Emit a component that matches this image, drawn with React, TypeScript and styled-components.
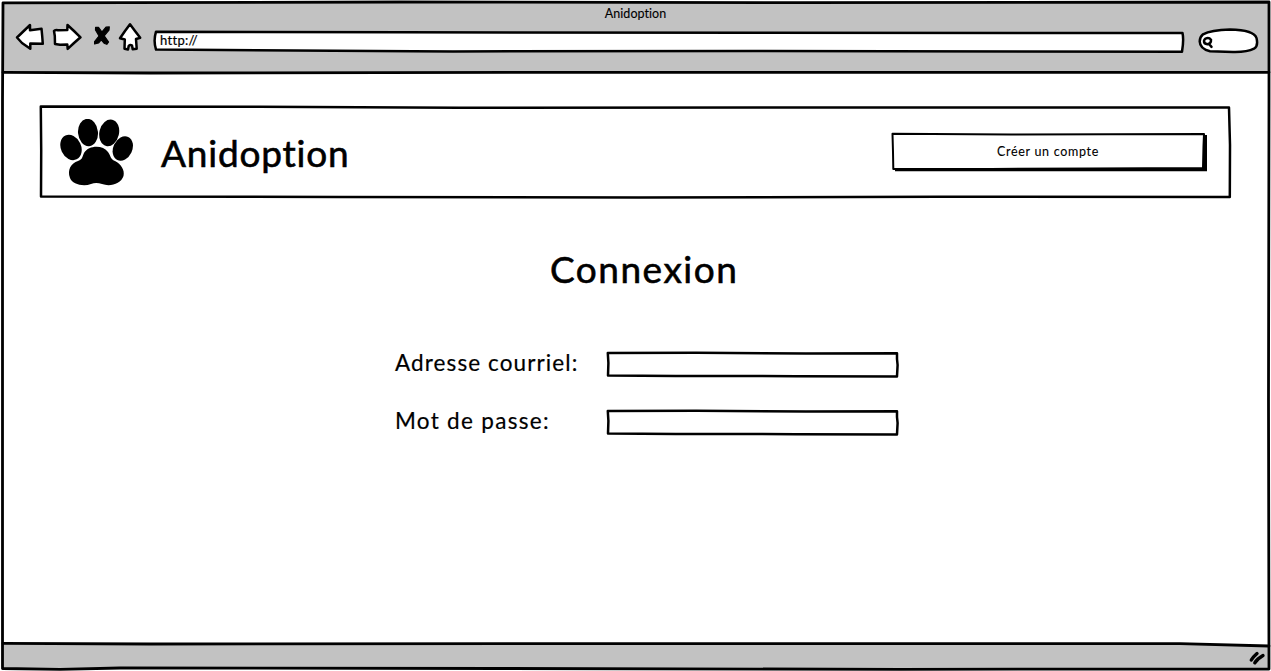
import React from "react";
import styled, { createGlobalStyle } from "styled-components";

const GlobalStyle = createGlobalStyle`
  * { box-sizing: border-box; }
  body { margin: 0; background: #fff; color: #000; font-family: Lato, "Open Sans", sans-serif; }
`;

const BrowserWindow = styled.div`
  position: relative;
  width: 1271px;
  height: 671px;
  padding: 2px;
  display: flex;
  flex-direction: column;
  overflow: hidden;
`;

const Chrome = styled.header`
  height: 71px;
  background: #c2c2c2;
  display: flex;
  flex-direction: column;
`;

const WindowTitle = styled.div`
  height: 20px;
  padding-top: 4px;
  text-align: center;
  font-size: 12.5px;
  line-height: 15px;
  letter-spacing: 0.05px;
  -webkit-text-stroke: 0.1px #000;
`;

const Toolbar = styled.div`
  display: flex;
  align-items: flex-start;
  padding-left: 12px;
`;

const NavIcon = styled.svg<{ $gap: number }>`
  display: block;
  flex: none;
  margin-right: ${(p) => p.$gap}px;
  stroke: #000;
  stroke-width: 2.5;
  stroke-linejoin: round;
  stroke-linecap: round;
  fill: #fff;
`;

const SolidIcon = styled(NavIcon)`
  fill: #000;
  stroke-width: 1.2;
`;

const AddressBar = styled.div`
  position: relative;
  width: 1031px;
  height: 23px;
  margin: 8px 14px 0 0;
  padding: 2px 0 0 7px;
  font-size: 13px;
  line-height: 17px;
  letter-spacing: 0.3px;
  -webkit-text-stroke: 0.2px #000;
`;

const Outline = styled.svg<{ $weight?: number; $fill?: string }>`
  position: absolute;
  inset: 0;
  width: 100%;
  height: 100%;
  overflow: visible;
  pointer-events: none;
  fill: ${(p) => p.$fill ?? "none"};
  stroke: #000;
  stroke-width: ${(p) => p.$weight ?? 2.5};
  stroke-linejoin: round;
  stroke-linecap: round;
`;

const ShadowShape = styled.path`
  fill: #000;
  stroke: none;
`;

const Label = styled.span`
  position: relative;
`;

const Page = styled.main`
  flex: 1;
  display: flex;
  flex-direction: column;
  padding: 32px 39px 0 37px;
`;

const Banner = styled.section`
  position: relative;
  height: 93px;
  width: 1193px;
  display: flex;
  align-items: center;
  padding: 2px 25px 0 20px;
`;

const Paw = styled.svg`
  display: block;
  flex: none;
  margin-right: 27px;
`;

const Heading = styled.h1<{ $spacing: number }>`
  margin: 0;
  font-size: 37px;
  line-height: 44px;
  font-weight: 400;
  letter-spacing: ${(p) => p.$spacing}px;
  -webkit-text-stroke: 0.6px #000;
`;

const AccountButton = styled.button`
  position: relative;
  width: 316px;
  height: 39px;
  margin: 0 0 3px auto;
  padding: 1px 2px 0 0;
  border: 0;
  background: none;
  color: #000;
  font-family: inherit;
  font-size: 12.5px;
  letter-spacing: 0.7px;
  -webkit-text-stroke: 0.1px #000;
`;

const LoginForm = styled.form`
  width: 504px;
  margin: 49px 0 0 356px;
  display: flex;
  flex-direction: column;
`;

const FormTitle = styled.div`
  padding-left: 155px;
  margin-bottom: 60px;
`;

const FieldRow = styled.label`
  display: flex;
  justify-content: space-between;
  align-items: center;
  height: 27px;
  margin-bottom: 31px;
`;

const FieldName = styled.span<{ $spacing: number }>`
  padding-bottom: 4px;
  font-size: 22.5px;
  line-height: 27px;
  letter-spacing: ${(p) => p.$spacing}px;
  -webkit-text-stroke: 0.2px #000;
`;

const FieldBox = styled.span`
  position: relative;
  width: 293px;
  height: 27px;
`;

const StatusBar = styled.footer`
  height: 26px;
  display: flex;
  justify-content: flex-end;
  align-items: flex-start;
  padding: 7px 3px 0 0;
  background: #c2c2c2;
  clip-path: polygon(0 0, 88% 0, 100% 3px, 100% 100%, 0 100%);
`;

const ResizeGrip = styled.svg`
  display: block;
  fill: none;
  stroke: #000;
  stroke-width: 3.4;
  stroke-linecap: round;
`;

const Field = ({ name, spacing }: { name: string; spacing: number }) => (
  <FieldRow>
    <FieldName $spacing={spacing}>{name}</FieldName>
    <FieldBox>
      <Outline viewBox="0 0 293 27">
        <path d="M1.8 2 L90 1.8 L200 2.6 L291 2.3 L291 8 L291.6 14 L291 25.4 L190 25.2 L70 24.9 L2 24.6 L2.4 12 Z" />
      </Outline>
    </FieldBox>
  </FieldRow>
);

export default function App() {
  return (
    <>
      <GlobalStyle />
      <BrowserWindow>
        <Chrome>
          <WindowTitle>Anidoption</WindowTitle>
          <Toolbar>
            <NavIcon $gap={6} width="31" height="30" viewBox="14 22 31 30">
              <path d="M17 37.5 L30 25 L30 30.3 L41.5 28.7 L42.2 36 L42.8 43.8 L30.3 43.5 L30.3 48.7 L22 43 Z" />
            </NavIcon>
            <NavIcon $gap={9} width="33" height="30" viewBox="51 22 33 30">
              <path d="M54 31 Q55 29.5 58 30.2 L67.3 30 L67.5 25 L74 31 L80.5 37.3 L74 43 L67.7 48.8 L67.3 44.5 L60 44.7 L55 44 L54.8 36 Z" />
            </NavIcon>
            <SolidIcon $gap={6} width="18" height="30" viewBox="93 22 18 30">
              <path d="M95.6 27.3 L98.5 27.4 L102 32 L106 27.2 L109.3 26.9 L109 30 L104.2 35.8 L108.6 42 L106.8 44.3 L104.5 43.5 L101.2 39.8 L98.5 43 L94.6 44 L94.6 41.5 L99 36 L95.5 30 Z" />
            </SolidIcon>
            <NavIcon $gap={11} width="25" height="30" viewBox="117 22 25 30">
              <path d="M130 24.3 L135 31 L140.2 37.8 L136 39 L136.7 48.7 L132.7 49.2 L132 45.6 Q130 44 128.7 46 L128 49.4 L124.5 48.7 L124.8 39.5 L120 38.3 L125 31 Z" />
            </NavIcon>
            <AddressBar>
              <Outline viewBox="0 0 1031 23" $fill="#fff">
                <path d="M3 1.7 L250 2.2 L600 2.8 L1029.5 3 Q1031 10 1029 21.7 L600 21 L300 21.4 L3 19.5 Q.2 11 3 1.7 Z" />
              </Outline>
              <Label>http://</Label>
            </AddressBar>
            <NavIcon $gap={0} width="61" height="32" viewBox="1198 22 61 32">
              <path d="M1203 34.3 Q1211 30 1230 29.5 Q1254 30 1256.5 38 Q1258.5 46 1254 48.7 Q1247 52.3 1233 52 L1210 51.2 Q1200 49 1199.7 41.5 Q1199.8 37 1203 34.3 Z" />
              <path d="M1205.5 38.6 Q1209 37.2 1211 39.7 Q1211.3 43.8 1207.5 44.2 Q1203.8 43.8 1204 41 Q1204.2 39.4 1205.5 38.6 Z M1209 44 L1211.5 46.8" />
            </NavIcon>
          </Toolbar>
        </Chrome>

        <Page>
          <Banner>
            <Outline viewBox="0 0 1193 93">
              <path d="M1.8 1.6 L220 1.8 L420 2.8 L800 2.4 L1190 2.5 L1191 40 L1190.8 92 L900 91.8 L600 92.6 L300 92 L2 91.5 L2.2 45 Z" />
            </Outline>
            <Paw width="75" height="68" viewBox="59 119 75 68">
              <ellipse cx="71" cy="147.4" rx="10.1" ry="13.2" transform="rotate(-25 71 147.4)" />
              <ellipse cx="88" cy="132.5" rx="10" ry="13.7" transform="rotate(-5 88 132.5)" />
              <ellipse cx="109.2" cy="132.8" rx="9.8" ry="13.5" transform="rotate(13 109.2 132.8)" />
              <ellipse cx="122.8" cy="148.5" rx="9.5" ry="12.8" transform="rotate(25 122.8 148.5)" />
              <path d="M84 153 C89 145 103 145 108 152 C111 156 110 159 115 161 C121 164 125 170 123.5 176 C121 184 110 187 102 184 Q96 182 91 184 C83 187 72 184 70 178 C67 170 71 163 78 161 C83 159 82 157 84 153 Z" />
            </Paw>
            <Heading $spacing={0.8}>Anidoption</Heading>
            <AccountButton type="button">
              <Outline viewBox="0 0 316 39" $weight={2} $fill="#fff">
                <ShadowShape d="M4 3 H316 V39.2 H4 Z" />
                <path d="M1.5 1.8 L120 2.4 L313 2 L312.5 14 L312 36 L200 36.5 L100 37 L2.3 37 L2 20 Z" />
              </Outline>
              <Label>Créer un compte</Label>
            </AccountButton>
          </Banner>

          <LoginForm>
            <FormTitle>
              <Heading as="h2" $spacing={1.5}>Connexion</Heading>
            </FormTitle>
            <Field name="Adresse courriel:" spacing={1.1} />
            <Field name="Mot de passe:" spacing={1.3} />
          </LoginForm>
        </Page>

        <StatusBar>
          <ResizeGrip width="18" height="16" viewBox="1248 650 18 16">
            <path d="M1251.3 660 Q1253 657 1257 653.5" />
            <path d="M1254.8 662.8 Q1257 659 1263 655.5" />
          </ResizeGrip>
        </StatusBar>

        <Outline viewBox="0 0 1271 671" $weight={2.8}>
          <path d="M3 2.8 L400 2 L800 2.6 L1269 2 L1269 100 L1268.5 400 L1269 669 L900 669.3 L500 668.5 L120 668 L60 669.3 L2.5 668.5 L2.5 400 L2.5 100 Z" />
          <path d="M3 72.3 L150 73 L600 72.3 L1269 72.3" />
          <path d="M3 643.3 L150 644 L600 643.6 L1180 643.6 L1269 646" />
        </Outline>
      </BrowserWindow>
    </>
  );
}
